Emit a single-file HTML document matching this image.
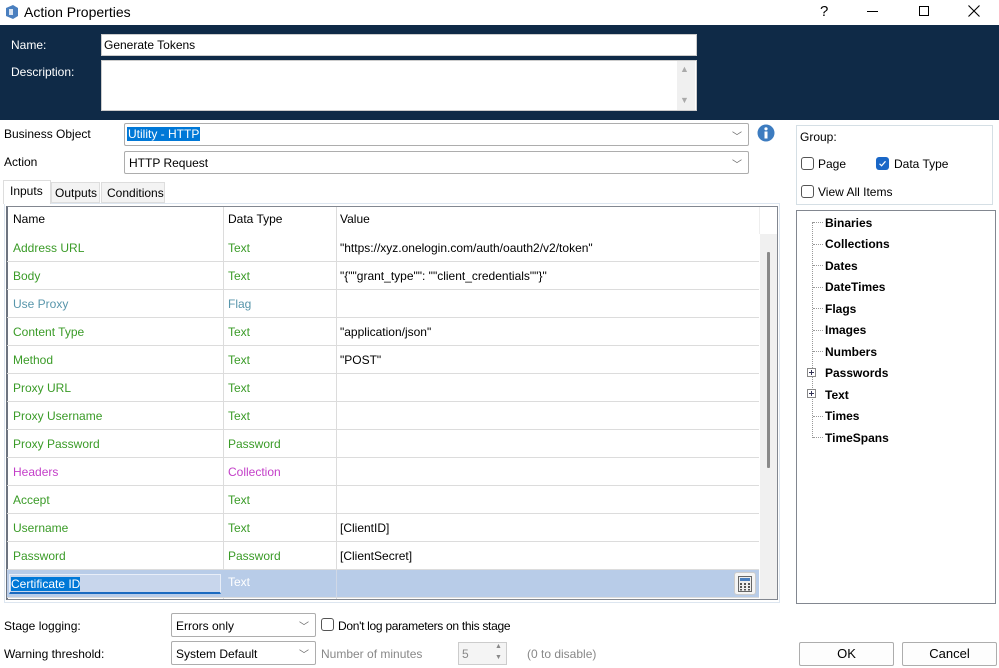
<!DOCTYPE html>
<html><head><meta charset="utf-8"><style>
*{box-sizing:border-box;margin:0;padding:0}
body{width:999px;height:668px;background:#fff;font-family:"Liberation Sans",sans-serif;font-size:12px;color:#000;position:relative;overflow:hidden}
.a{position:absolute}
.t{position:absolute;white-space:nowrap}
.combo{position:absolute;border:1px solid #adadad;background:#fff;border-radius:2px}
.chev{position:absolute;right:6px;top:4px;color:#666;font-size:10px}
.row{position:absolute;left:7px;width:752px;height:28px;border-bottom:1px solid #dcdcdc}
.row span{position:absolute;top:7px;white-space:nowrap}
.g{color:#3a9b27}.b{color:#5896ab}.m{color:#c33fc8}
.cb{position:absolute;width:13px;height:13px;border:1px solid #555;border-radius:3px;background:#fff}
.tree span{position:absolute;font-weight:bold;font-size:12px;left:825px}
.btn{position:absolute;border:1px solid #adadad;background:#fdfdfd;text-align:center;line-height:22px;font-size:13px;border-radius:2px}
</style></head><body>
<svg class="a" style="left:4px;top:4px" width="16" height="16"><path d="M2 4 L9 1 L14 4 L14 12 L9 15 L2 12Z" fill="#4a7fbf"/><path d="M5 5h4v6h-4z" fill="#fff" opacity=".8"/></svg>
<div class="t" style="left:24px;top:4px;font-size:14px">Action Properties</div>
<div class="t" style="left:820px;top:3px;font-size:15px">?</div>
<div class="a" style="left:867px;top:11px;width:11px;height:1px;background:#000"></div>
<div class="a" style="left:919px;top:6px;width:10px;height:10px;border:1px solid #000"></div>
<svg class="a" style="left:968px;top:5px" width="12" height="12"><path d="M0.5 0.5L11.5 11.5M11.5 0.5L0.5 11.5" stroke="#000" stroke-width="1.1"/></svg>
<div class="a" style="left:0;top:25px;width:999px;height:95px;background:#0f2a47"></div>
<div class="t" style="left:11px;top:38px;color:#fff">Name:</div>
<div class="t" style="left:11px;top:65px;color:#fff">Description:</div>
<div class="a" style="left:101px;top:34px;width:596px;height:22px;background:#fff;border:1px solid #ccc"></div>
<div class="t" style="left:104px;top:38px">Generate Tokens</div>
<div class="a" style="left:101px;top:60px;width:596px;height:51px;background:#fff;border:1px solid #ccc"></div>
<div class="a" style="left:677px;top:61px;width:18px;height:49px;background:#f0f0f0"></div>
<div class="t" style="left:680px;top:64px;color:#aaa;font-size:9px">▲</div>
<div class="t" style="left:680px;top:95px;color:#aaa;font-size:9px">▼</div>
<div class="t" style="left:4px;top:127px">Business Object</div>
<div class="combo" style="left:124px;top:123px;width:625px;height:23px"><span class="t" style="left:2px;top:3px;background:#0078d7;color:#fff;padding:0 1px">Utility - HTTP</span><span class="chev">﹀</span></div>
<svg class="a" style="left:757px;top:124px" width="18" height="18"><circle cx="9" cy="9" r="8.5" fill="#3d7cc0"/><rect x="7.5" y="7.5" width="3" height="7" fill="#fff"/><circle cx="9" cy="4.8" r="1.6" fill="#fff"/></svg>
<div class="t" style="left:4px;top:155px">Action</div>
<div class="combo" style="left:124px;top:151px;width:625px;height:23px"><span class="t" style="left:4px;top:4px">HTTP Request</span><span class="chev">﹀</span></div>
<div class="a" style="left:4px;top:203px;width:776px;height:400px;border:1px solid #dde6f0"></div>
<div class="a" style="left:3px;top:180px;width:48px;height:24px;background:#fff;border:1px solid #ddd;border-bottom:none"></div>
<div class="t" style="left:10px;top:184px">Inputs</div>
<div class="a" style="left:51px;top:182px;width:49px;height:21px;background:#f3f3f3;border:1px solid #ddd"></div>
<div class="t" style="left:55px;top:186px">Outputs</div>
<div class="a" style="left:101px;top:182px;width:64px;height:21px;background:#f3f3f3;border:1px solid #ddd"></div>
<div class="t" style="left:107px;top:186px">Conditions</div>
<div class="a" style="left:6px;top:206px;width:772px;height:394px;border:1px solid #828790;border-left:2px solid #6d7480;background:#fff"></div>
<div class="a" style="left:223px;top:207px;width:1px;height:392px;background:#dcdcdc"></div>
<div class="a" style="left:336px;top:207px;width:1px;height:392px;background:#dcdcdc"></div>
<div class="a" style="left:759px;top:207px;width:1px;height:27px;background:#eee"></div>
<div class="a" style="left:760px;top:234px;width:17px;height:365px;background:#f0f0f0"></div>
<div class="a" style="left:767px;top:252px;width:3px;height:216px;background:#8a8a8a;border-radius:1px"></div>
<div class="t" style="left:13px;top:212px">Name</div>
<div class="t" style="left:228px;top:212px">Data Type</div>
<div class="t" style="left:340px;top:212px">Value</div>
<div class="row" style="top:234px"><span class="g" style="left:6px">Address URL</span><span class="g" style="left:221px">Text</span><span style="left:333px">"https://xyz.onelogin.com/auth/oauth2/v2/token"</span></div>
<div class="row" style="top:262px"><span class="g" style="left:6px">Body</span><span class="g" style="left:221px">Text</span><span style="left:333px">"{""grant_type"": ""client_credentials""}"</span></div>
<div class="row" style="top:290px"><span class="b" style="left:6px">Use Proxy</span><span class="b" style="left:221px">Flag</span></div>
<div class="row" style="top:318px"><span class="g" style="left:6px">Content Type</span><span class="g" style="left:221px">Text</span><span style="left:333px">"application/json"</span></div>
<div class="row" style="top:346px"><span class="g" style="left:6px">Method</span><span class="g" style="left:221px">Text</span><span style="left:333px">"POST"</span></div>
<div class="row" style="top:374px"><span class="g" style="left:6px">Proxy URL</span><span class="g" style="left:221px">Text</span></div>
<div class="row" style="top:402px"><span class="g" style="left:6px">Proxy Username</span><span class="g" style="left:221px">Text</span></div>
<div class="row" style="top:430px"><span class="g" style="left:6px">Proxy Password</span><span class="g" style="left:221px">Password</span></div>
<div class="row" style="top:458px"><span class="m" style="left:6px">Headers</span><span class="m" style="left:221px">Collection</span></div>
<div class="row" style="top:486px"><span class="g" style="left:6px">Accept</span><span class="g" style="left:221px">Text</span></div>
<div class="row" style="top:514px"><span class="g" style="left:6px">Username</span><span class="g" style="left:221px">Text</span><span style="left:333px">[ClientID]</span></div>
<div class="row" style="top:542px"><span class="g" style="left:6px">Password</span><span class="g" style="left:221px">Password</span><span style="left:333px">[ClientSecret]</span></div>
<div class="row" style="top:570px;background:#b8cce8;height:28px"><span style="left:221px;top:5px;color:#fff">Text</span></div>
<div class="a" style="left:336px;top:570px;width:1px;height:28px;background:#d0d8e6"></div>
<div class="a" style="left:9px;top:574px;width:212px;height:20px;background:#c8d6ec;border:1px solid #e8eef8;border-bottom:2px solid #1a6ac0"></div>
<div class="t" style="left:11px;top:577px;background:#0078d7;color:#fff">Certificate ID</div>
<div class="a" style="left:734px;top:572px;width:22px;height:23px;background:#f4f4f4;border:1px solid #ccc;border-radius:3px"></div>
<svg class="a" style="left:738px;top:576px" width="14" height="16"><rect x="0.5" y="0.5" width="13" height="15" fill="#eee" stroke="#666"/><rect x="2" y="2" width="10" height="3" fill="#4a7fbf"/><g fill="#555"><rect x="2" y="7" width="2" height="2"/><rect x="6" y="7" width="2" height="2"/><rect x="10" y="7" width="2" height="2"/><rect x="2" y="10" width="2" height="2"/><rect x="6" y="10" width="2" height="2"/><rect x="10" y="10" width="2" height="2"/><rect x="2" y="13" width="2" height="1.5"/><rect x="6" y="13" width="2" height="1.5"/><rect x="10" y="13" width="2" height="1.5"/></g></svg>
<div class="a" style="left:796px;top:125px;width:197px;height:80px;border:1px solid #d5dfe5"></div>
<div class="t" style="left:800px;top:130px">Group:</div>
<div class="cb" style="left:801px;top:157px"></div>
<div class="t" style="left:818px;top:157px">Page</div>
<svg class="a" style="left:876px;top:157px" width="13" height="13"><rect width="13" height="13" rx="3" fill="#1a67c7"/><path d="M3.5 6.8L5.6 8.8L9.5 4.3" stroke="#fff" stroke-width="1.2" fill="none"/></svg>
<div class="t" style="left:894px;top:157px">Data Type</div>
<div class="cb" style="left:801px;top:185px"></div>
<div class="t" style="left:818px;top:185px">View All Items</div>
<div class="a" style="left:796px;top:210px;width:200px;height:394px;border:1px solid #828790"></div>
<div class="a" style="left:812px;top:222px;width:0;height:216px;border-left:1px dotted #999"></div>
<div class="tree">
<span style="top:216px">Binaries</span><span style="top:237px">Collections</span><span style="top:259px">Dates</span><span style="top:280px">DateTimes</span><span style="top:302px">Flags</span><span style="top:323px">Images</span><span style="top:345px">Numbers</span><span style="top:366px">Passwords</span><span style="top:388px">Text</span><span style="top:409px">Times</span><span style="top:431px">TimeSpans</span>
</div>
<div class="a" style="left:813px;top:222px;width:10px;height:0;border-top:1px dotted #999"></div>
<div class="a" style="left:813px;top:244px;width:10px;height:0;border-top:1px dotted #999"></div>
<div class="a" style="left:813px;top:265px;width:10px;height:0;border-top:1px dotted #999"></div>
<div class="a" style="left:813px;top:287px;width:10px;height:0;border-top:1px dotted #999"></div>
<div class="a" style="left:813px;top:308px;width:10px;height:0;border-top:1px dotted #999"></div>
<div class="a" style="left:813px;top:330px;width:10px;height:0;border-top:1px dotted #999"></div>
<div class="a" style="left:813px;top:351px;width:10px;height:0;border-top:1px dotted #999"></div>
<div class="a" style="left:813px;top:416px;width:10px;height:0;border-top:1px dotted #999"></div>
<div class="a" style="left:813px;top:437px;width:10px;height:0;border-top:1px dotted #999"></div>
<svg class="a" style="left:807px;top:368px" width="10" height="10"><rect x="0.5" y="0.5" width="8" height="8" fill="#fff" stroke="#888"/><path d="M2 4.5h5M4.5 2v5" stroke="#335"/></svg>
<svg class="a" style="left:807px;top:389px" width="10" height="10"><rect x="0.5" y="0.5" width="8" height="8" fill="#fff" stroke="#888"/><path d="M2 4.5h5M4.5 2v5" stroke="#335"/></svg>
<div class="t" style="left:4px;top:619px">Stage logging:</div>
<div class="combo" style="left:171px;top:613px;width:145px;height:24px"><span class="t" style="left:4px;top:5px">Errors only</span><span class="chev">﹀</span></div>
<div class="cb" style="left:321px;top:618px"></div>
<div class="t" style="left:338px;top:619px;letter-spacing:-0.3px">Don't log parameters on this stage</div>
<div class="t" style="left:4px;top:647px">Warning threshold:</div>
<div class="combo" style="left:171px;top:641px;width:145px;height:24px"><span class="t" style="left:4px;top:5px">System Default</span><span class="chev">﹀</span></div>
<div class="t" style="left:321px;top:647px;color:#888">Number of minutes</div>
<div class="a" style="left:458px;top:642px;width:49px;height:23px;border:1px solid #ccc;background:#f4f4f4"></div>
<div class="t" style="left:462px;top:647px;color:#888">5</div>
<div class="t" style="left:495px;top:643px;color:#888;font-size:7px">▲</div>
<div class="t" style="left:495px;top:654px;color:#888;font-size:7px">▼</div>
<div class="t" style="left:527px;top:647px;color:#888">(0 to disable)</div>
<div class="btn" style="left:799px;top:642px;width:95px;height:24px">OK</div>
<div class="btn" style="left:902px;top:642px;width:95px;height:24px">Cancel</div>
</body></html>
